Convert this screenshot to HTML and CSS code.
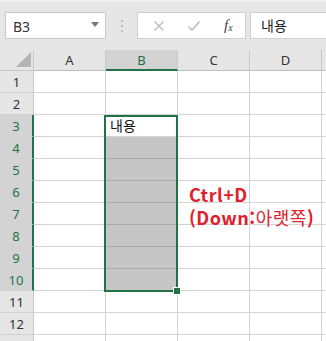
FILE: index.html
```html
<!DOCTYPE html>
<html lang="ko">
<head>
<meta charset="utf-8">
<link rel="stylesheet" href="styles.css">
</head>
<body>
<div class="app">
  <div class="formula-bar">
    <div class="namebox"><span>B3</span><svg class="dd" width="8" height="5" viewBox="0 0 8 5"><path d="M0 0H8L4 5Z" fill="#777"/></svg></div>
    <div class="dots"><i></i><i></i><i></i></div>
    <div class="btns">
      <svg width="12" height="12" viewBox="0 0 12 12"><path d="M1.5 1.5L10.5 10.5M10.5 1.5L1.5 10.5" stroke="#bdbdbd" stroke-width="1.4"/></svg>
      <svg width="14" height="12" viewBox="0 0 14 12"><path d="M1.5 6.5L5 10L12.5 1.5" stroke="#bdbdbd" stroke-width="1.6" fill="none"/></svg>
      <span class="fx"><i>f</i><sub>x</sub></span>
    </div>
    <div class="input">내용</div>
  </div>
  <div class="sheet">
    <div class="grid">
      <div class="corner"><span class="tri"></span></div>
      <div class="ch">A</div><div class="ch sel">B</div><div class="ch">C</div><div class="ch">D</div><div class="ch last"></div>

      <div class="rh">1</div><div class="c"></div><div class="c"></div><div class="c"></div><div class="c"></div><div class="c last"></div>
      <div class="rh">2</div><div class="c"></div><div class="c"></div><div class="c"></div><div class="c"></div><div class="c last"></div>
      <div class="rh sel">3</div><div class="c"></div><div class="c txt">내용</div><div class="c"></div><div class="c"></div><div class="c last"></div>
      <div class="rh sel">4</div><div class="c"></div><div class="c g"></div><div class="c"></div><div class="c"></div><div class="c last"></div>
      <div class="rh sel">5</div><div class="c"></div><div class="c g"></div><div class="c"></div><div class="c"></div><div class="c last"></div>
      <div class="rh sel">6</div><div class="c"></div><div class="c g"></div><div class="c"></div><div class="c"></div><div class="c last"></div>
      <div class="rh sel">7</div><div class="c"></div><div class="c g"></div><div class="c"></div><div class="c"></div><div class="c last"></div>
      <div class="rh sel">8</div><div class="c"></div><div class="c g"></div><div class="c"></div><div class="c"></div><div class="c last"></div>
      <div class="rh sel">9</div><div class="c"></div><div class="c g"></div><div class="c"></div><div class="c"></div><div class="c last"></div>
      <div class="rh sel">10</div><div class="c"></div><div class="c g"></div><div class="c"></div><div class="c"></div><div class="c last"></div>
      <div class="rh">11</div><div class="c"></div><div class="c"></div><div class="c"></div><div class="c"></div><div class="c last"></div>
      <div class="rh">12</div><div class="c"></div><div class="c"></div><div class="c"></div><div class="c"></div><div class="c last"></div>
      <div class="rh"></div><div class="c"></div><div class="c"></div><div class="c"></div><div class="c"></div><div class="c last"></div>
    </div>
    <div class="selection"><span class="handle"></span></div>
    <div class="note"><div>Ctrl+D</div><div>(Down:<span class="ko">아랫쪽</span>)</div></div>
  </div>
</div>
</body>
</html>
```

FILE: styles.css
```css
* { box-sizing: border-box; }
html, body { margin: 0; padding: 0; background: #fff; }
body { width: 326px; height: 341px; overflow: hidden; font-family: "Noto Sans", "Noto Sans CJK KR", sans-serif; }
.app { width: 326px; height: 341px; overflow: hidden; }

.formula-bar {
  height: 50px;
  background: #e6e6e6;
  border-top: 2px solid #f1f1f1;
  display: flex;
  align-items: flex-start;
  padding: 10px 0 0 5px;
}
.namebox {
  width: 101px; height: 27px;
  background: #fff;
  border: 1px solid #c9c9c9;
  display: flex; align-items: center; justify-content: space-between;
  padding: 0 6px 0 7px;
  font-size: 14px; color: #333;
}
.namebox span { margin-top: 1px; }
.dd { margin-top: -2px; }
.dots { width: 31px; height: 27px; display: flex; flex-direction: column; align-items: center; justify-content: center; gap: 3px; }
.dots i { display: block; width: 2px; height: 2px; background: #bcbcbc; }
.btns {
  width: 109px; height: 27px;
  background: #fff;
  border: 1px solid #cfcfcf;
  display: flex; align-items: center;
  padding: 0 0 0 15px;
  gap: 22px;
}
.fx { font-family: "Liberation Serif", serif; font-style: italic; font-size: 15px; color: #444; margin-left: 1px; }
.fx i { font-style: italic; }
.fx sub { font-size: 10px; vertical-align: -1px; }
.input {
  flex: 1; height: 27px; margin-left: 4px;
  background: #fff;
  border: 1px solid #cfcfcf; border-right: none;
  font-family: "Noto Sans CJK KR", sans-serif;
  font-size: 14px; color: #222;
  padding: 2px 0 0 10px;
}

.sheet { position: relative; }
.grid {
  display: grid;
  grid-template-columns: 34px 72px 72px 72px 72px 4px;
  grid-template-rows: 21px repeat(13, 22px);
}
.corner { background: #e6e6e6; border-right: 1px solid #c9c9c9; border-bottom: 1px solid #c9c9c9; position: relative; }
.tri { position: absolute; right: 2px; bottom: 3px; width: 0; height: 0; border-left: 15px solid transparent; border-bottom: 15px solid #b4b4b4; }
.ch {
  background: #e6e6e6;
  border-right: 1px solid #c9c9c9; border-bottom: 1px solid #bdbdbd;
  display: flex; align-items: center; justify-content: center;
  font-size: 13px; color: #333;
}
.ch.sel { background: #d3d3d3; color: #217346; border-bottom: 2px solid #217346; }
.ch.last, .c.last { border-right: none; }
.rh {
  background: #e6e6e6;
  border-right: 1px solid #c9c9c9; border-bottom: 1px solid #d0d0d0;
  display: flex; align-items: center; justify-content: center;
  font-size: 13px; color: #333;
}
.rh.sel { background: #d3d3d3; color: #217346; border-right: 2px solid #217346; }
.c { border-right: 1px solid #d4d4d4; border-bottom: 1px solid #d4d4d4; }
.c.g { background: #c6c6c6; border-bottom-color: #aaaaaa; border-right-color: #c6c6c6; }
.txt { font-family: "Noto Sans CJK KR", sans-serif; font-size: 14px; color: #111; padding: 0 0 0 4px; line-height: 20px; }

.selection {
  position: absolute;
  left: 104px; top: 65px;
  width: 74px; height: 177px;
  border: 2px solid #217346;
}
.handle {
  position: absolute; right: -5px; bottom: -5px;
  width: 6px; height: 6px;
  background: #217346;
  border: 1px solid #fff;
  box-sizing: content-box;
}
.note {
  position: absolute;
  left: 189px; top: 133px;
  font-family: "Noto Sans CJK KR", sans-serif;
  font-weight: 700; font-size: 18px; line-height: 23px;
  color: #e0202b;
  letter-spacing: 0.5px;
}
.note .ko { font-weight: 400; }
```
